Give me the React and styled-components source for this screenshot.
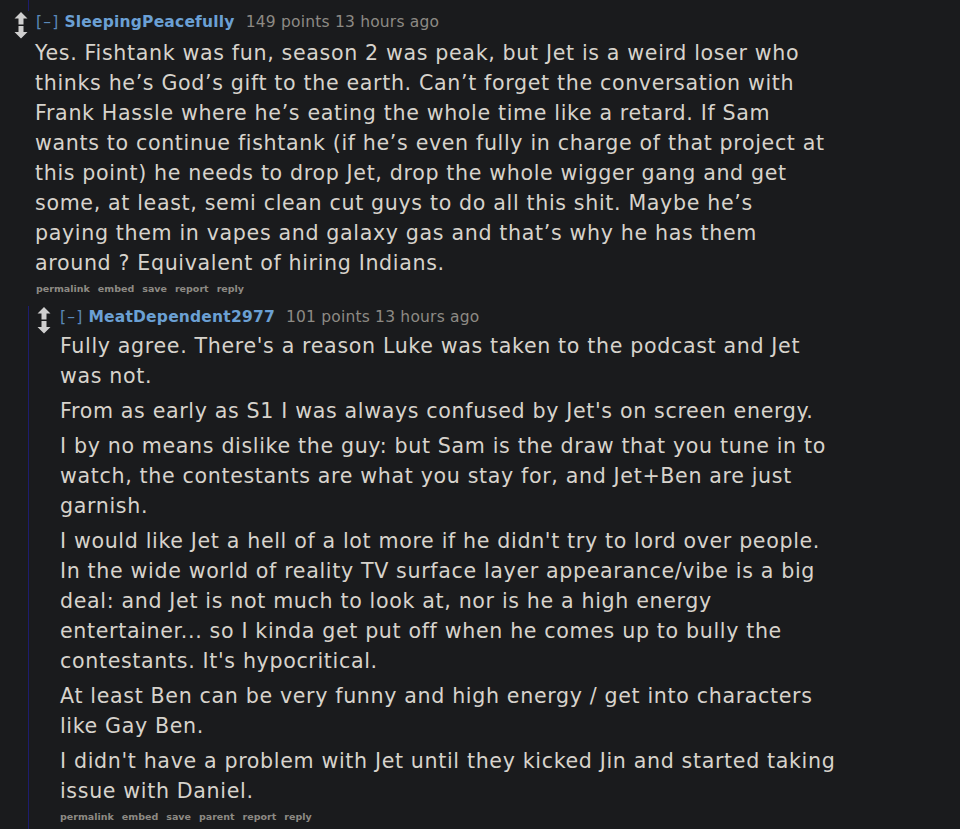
import React from 'react';
import styled, { createGlobalStyle } from 'styled-components';

const GlobalStyle = createGlobalStyle`
  html, body {
    margin: 0;
    padding: 0;
    background: #1a1b1d;
  }
  body {
    font-family: "DejaVu Sans", Verdana, sans-serif;
    color: #d7d3cc;
  }
`;

const Page = styled.div`
  width: 960px;
  height: 829px;
  overflow: hidden;
  background: #1a1b1d;
`;

const PrevThread = styled.div`
  margin-left: 28px;
  height: 11px;
  border-left: 1px solid #1d1d6e;
`;

const Comment = styled.div`
  display: flex;
  align-items: flex-start;
  margin-left: ${p => p.$indent || 0}px;
  padding-left: ${p => p.$pad || 0}px;
  border-left: ${p => (p.$child ? '1px solid #1d1d6e' : 'none')};
  margin-top: ${p => p.$top || 0}px;
`;

const Votes = styled.div`
  width: 14px;
  flex: none;
  padding-top: 1px;
  margin-right: 7px;
`;

const Entry = styled.div`
  flex: 1;
  min-width: 0;
`;

const Tagline = styled.div`
  display: flex;
  align-items: baseline;
  font-size: 15.5px;
  line-height: 22px;
  letter-spacing: 0.2px;
  white-space: nowrap;
  margin-left: ${p => p.$shift || 0}px;
`;

const Toggle = styled.span`
  color: #5b89b8;
  letter-spacing: 1.2px;
  margin-right: 5px;
`;

const Author = styled.span`
  color: #6ba0d4;
  font-weight: bold;
  margin-right: 11px;
`;

const Score = styled.span`
  color: #8d8a84;
`;

const Body = styled.div`
  font-size: 20.6px;
  line-height: 30px;
  letter-spacing: 0.65px;
  white-space: nowrap;
  margin-top: ${p => p.$gap ?? 5}px;
  margin-left: ${p => p.$shift || 0}px;
  p {
    margin: 0 0 5px;
  }
  p:last-child {
    margin-bottom: 0;
  }
`;

const Buttons = styled.ul`
  list-style: none;
  display: flex;
  gap: 8px;
  padding: 0;
  margin: 3px 0 0;
  font-size: 9.5px;
  line-height: 16px;
  font-weight: bold;
  color: #8d8a84;
  margin-left: ${p => p.$shift || 0}px;
`;

const Arrows = () => (
  <svg width="14" height="27" viewBox="0 0 14 27" fill="#cfcfcf">
    <path d="M7 0 L13.5 6.5 L9.5 6.5 L9.5 12.5 L4.5 12.5 L4.5 6.5 L0.5 6.5 Z" />
    <path d="M4.5 14 L9.5 14 L9.5 20 L13.5 20 L7 26.5 L0.5 20 L4.5 20 Z" />
  </svg>
);

const Lines = ({ lines }) => (
  <p>
    {lines.map((l, i) => (
      <React.Fragment key={i}>
        {l}
        {i < lines.length - 1 && <br />}
      </React.Fragment>
    ))}
  </p>
);

const parentText = [
  'Yes. Fishtank was fun, season 2 was peak, but Jet is a weird loser who',
  'thinks he’s God’s gift to the earth. Can’t forget the conversation with',
  'Frank Hassle where he’s eating the whole time like a retard. If Sam',
  'wants to continue fishtank (if he’s even fully in charge of that project at',
  'this point) he needs to drop Jet, drop the whole wigger gang and get',
  'some, at least, semi clean cut guys to do all this shit. Maybe he’s',
  'paying them in vapes and galaxy gas and that’s why he has them',
  'around ? Equivalent of hiring Indians.',
];

const childParas = [
  [
    "Fully agree. There's a reason Luke was taken to the podcast and Jet",
    'was not.',
  ],
  ["From as early as S1 I was always confused by Jet's on screen energy."],
  [
    'I by no means dislike the guy: but Sam is the draw that you tune in to',
    'watch, the contestants are what you stay for, and Jet+Ben are just',
    'garnish.',
  ],
  [
    "I would like Jet a hell of a lot more if he didn't try to lord over people.",
    'In the wide world of reality TV surface layer appearance/vibe is a big',
    'deal: and Jet is not much to look at, nor is he a high energy',
    'entertainer... so I kinda get put off when he comes up to bully the',
    "contestants. It's hypocritical.",
  ],
  [
    'At least Ben can be very funny and high energy / get into characters',
    'like Gay Ben.',
  ],
  [
    "I didn't have a problem with Jet until they kicked Jin and started taking",
    'issue with Daniel.',
  ],
];

const links = ['permalink', 'embed', 'save', 'report', 'reply'];
const childLinks = ['permalink', 'embed', 'save', 'parent', 'report', 'reply'];

export default function App() {
  return (
    <Page>
      <GlobalStyle />
      <PrevThread />
      <Comment $indent={14}>
        <Votes>
          <Arrows />
        </Votes>
        <Entry>
          <Tagline $shift={1}>
            <Toggle>[–]</Toggle>
            <Author>SleepingPeacefully</Author>
            <Score>149 points 13 hours ago</Score>
          </Tagline>
          <Body>
            <Lines lines={parentText} />
          </Body>
          <Buttons $shift={1}>
            {links.map(l => (
              <li key={l}>{l}</li>
            ))}
          </Buttons>
          <Comment $child $indent={-7} $pad={8} $top={9}>
            <Votes>
              <Arrows />
            </Votes>
            <Entry>
              <Tagline $shift={2}>
                <Toggle>[–]</Toggle>
                <Author>MeatDependent2977</Author>
                <Score>101 points 13 hours ago</Score>
              </Tagline>
              <Body $shift={2} $gap={3}>
                {childParas.map((p, i) => (
                  <Lines key={i} lines={p} />
                ))}
              </Body>
              <Buttons $shift={2}>
                {childLinks.map(l => (
                  <li key={l}>{l}</li>
                ))}
              </Buttons>
              <div style={{ height: 80 }} />
            </Entry>
          </Comment>
        </Entry>
      </Comment>
    </Page>
  );
}
